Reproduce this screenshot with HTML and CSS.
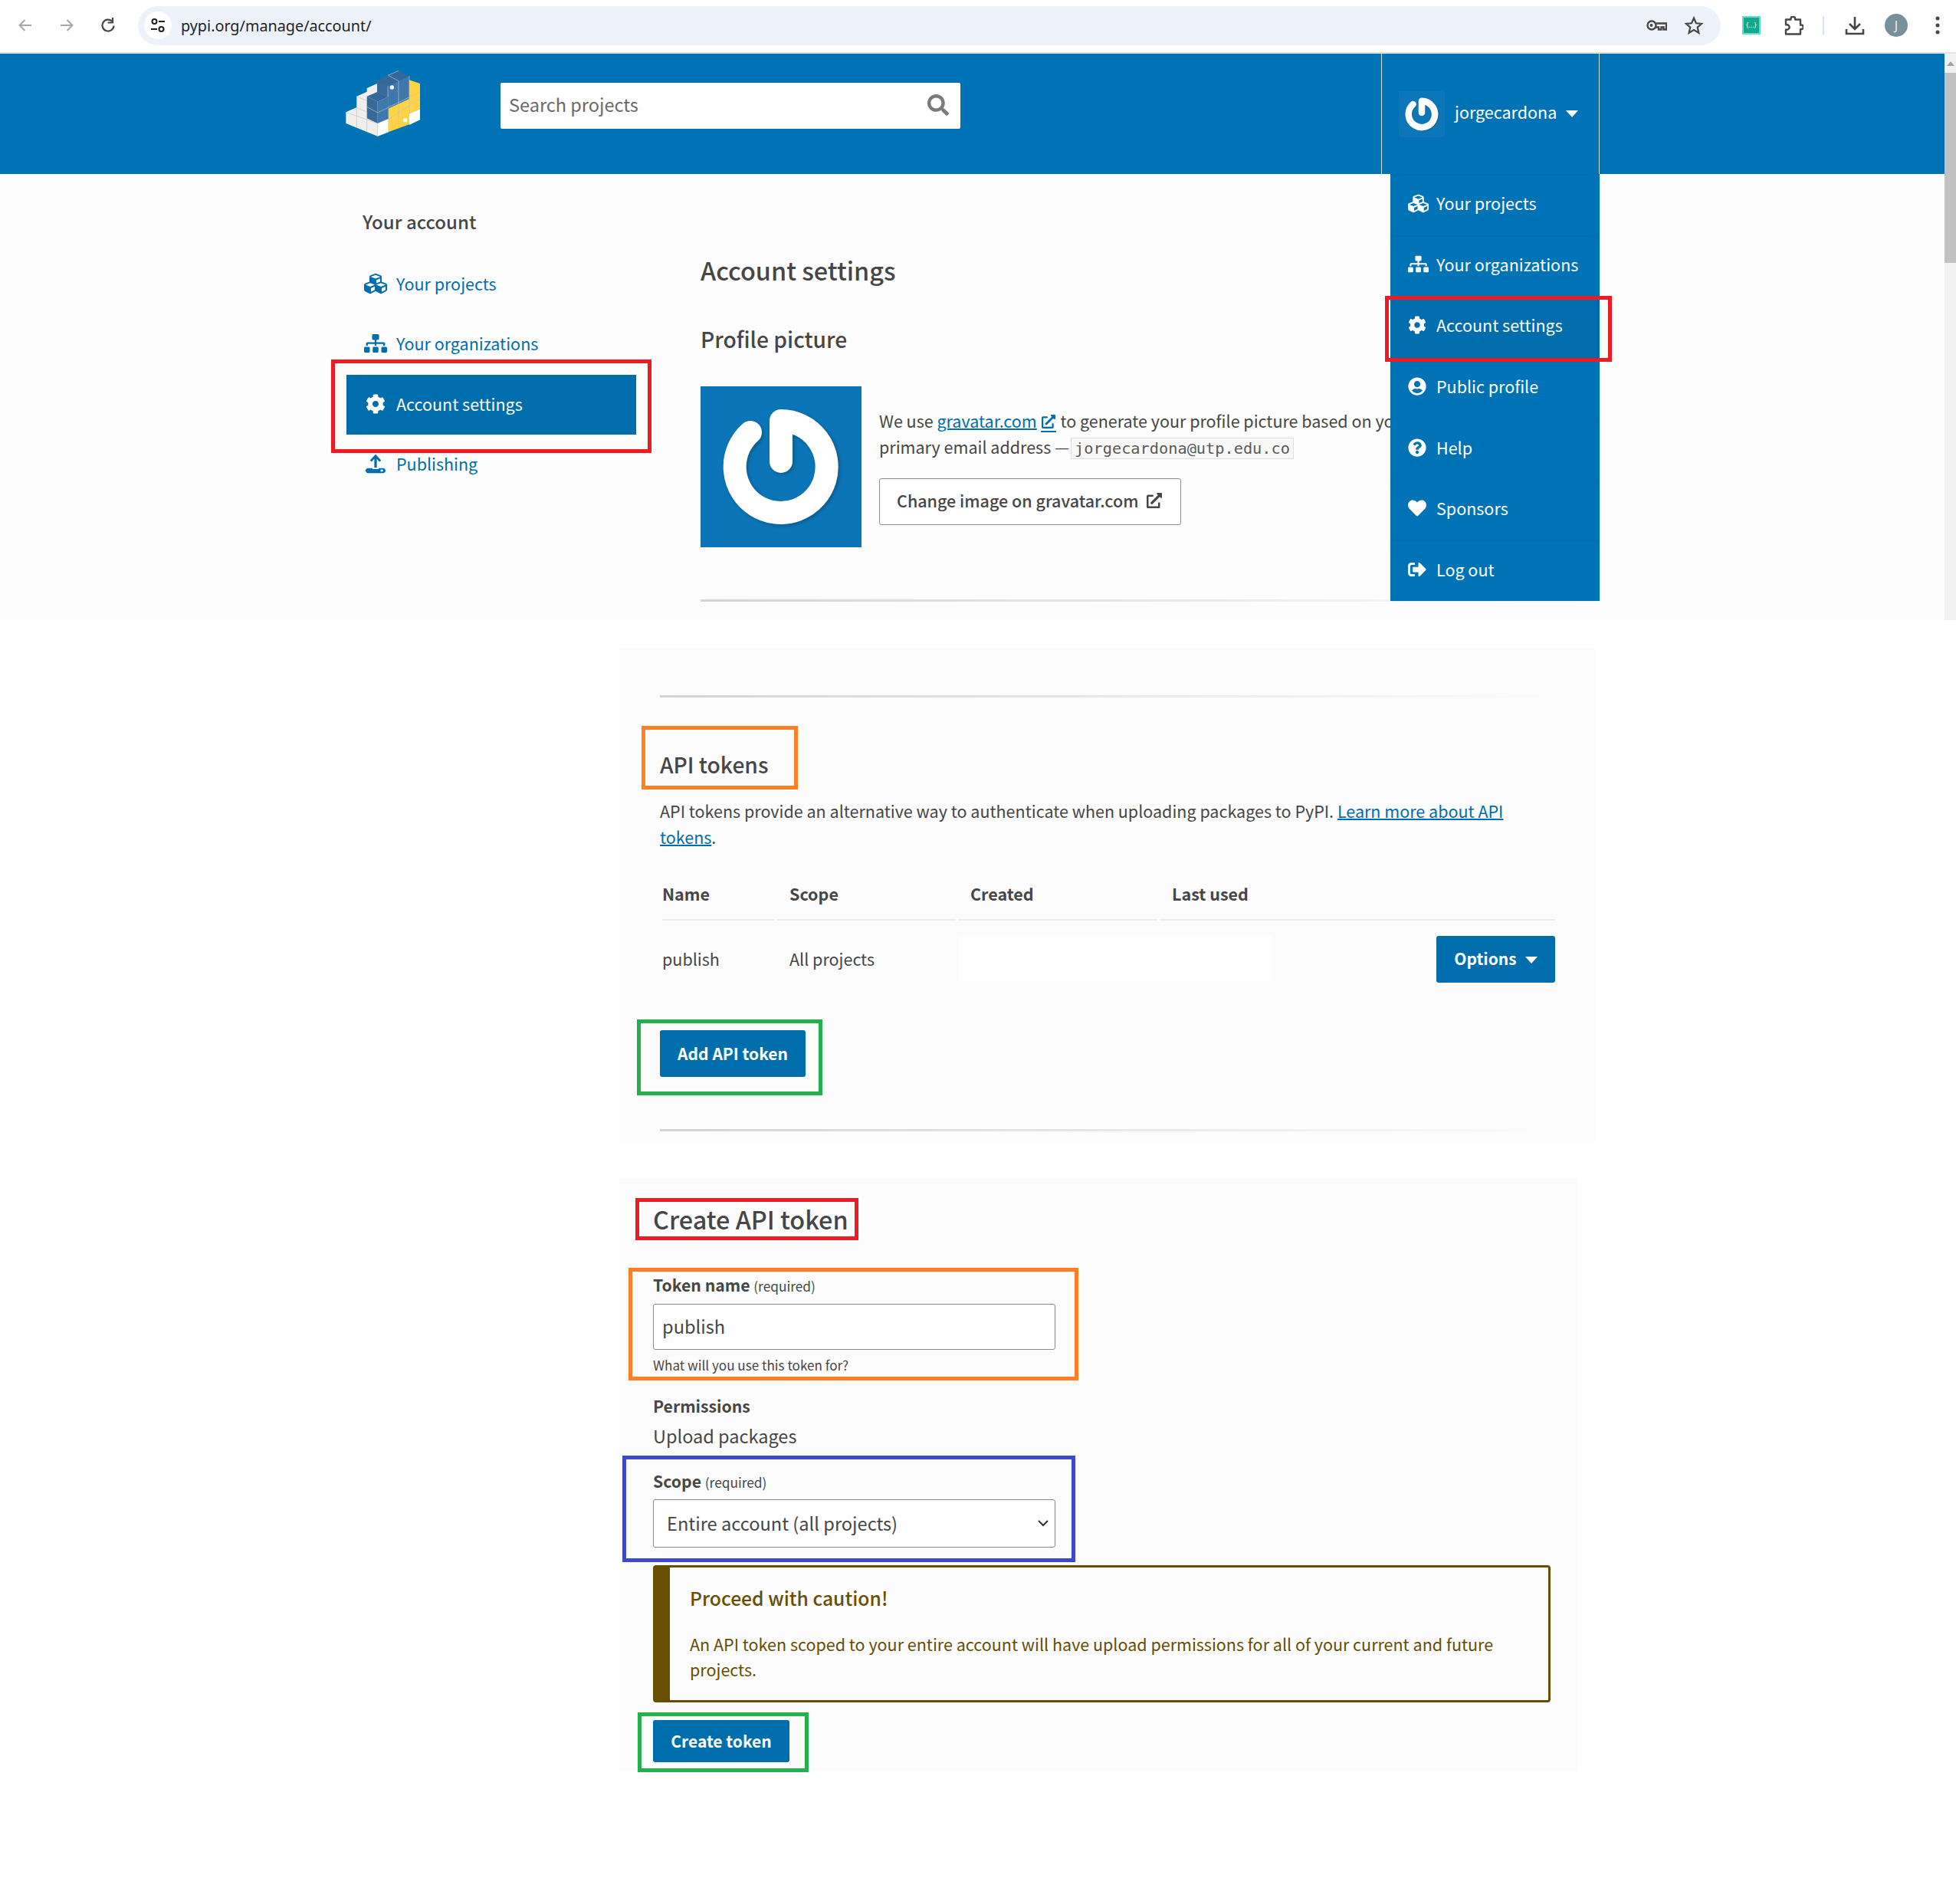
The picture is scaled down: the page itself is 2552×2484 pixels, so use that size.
FILE: index.html
```html
<!DOCTYPE html>
<html lang="en">
<head>
	<meta charset="UTF-8">
	<title>Account settings - PyPI</title>
	<link rel="stylesheet" href="styles.css">
</head>
<body>
<svg class="defs" width="0" height="0">
	<symbol id="i-cubes" viewBox="0 0 512 512"><path d="M488.6 250.2L392 214V105.5c0-15-9.3-28.4-23.4-33.7l-100-37.5c-8.1-3.1-17.1-3.1-25.3 0l-100 37.5c-14.1 5.3-23.4 18.7-23.4 33.7V214l-96.6 36.2C9.3 255.5 0 268.9 0 283.9V394c0 13.6 7.7 26.1 19.9 32.2l100 50c10.1 5.1 22.1 5.1 32.2 0l103.9-52 103.9 52c10.1 5.1 22.1 5.1 32.2 0l100-50c12.2-6.1 19.9-18.6 19.9-32.2V283.9c0-15-9.3-28.4-23.4-33.7zM358 214.8l-85 31.9v-68.2l85-37v73.3zM154 104.1l102-38.2 102 38.2v.6l-102 41.4-102-41.4v-.6zm84 291.1l-85 42.5v-79.1l85-38.8v75.4zm0-112l-102 41.4-102-41.4v-.6l102-38.2 102 38.2v.6zm240 112l-85 42.5v-79.1l85-38.8v75.4zm0-112l-102 41.4-102-41.4v-.6l102-38.2 102 38.2v.6z"/></symbol>
	<symbol id="i-sitemap" viewBox="0 0 640 512"><path d="M128 352H32c-17.67 0-32 14.33-32 32v96c0 17.67 14.33 32 32 32h96c17.67 0 32-14.33 32-32v-96c0-17.67-14.33-32-32-32zm-24-80h192v48h48v-48h192v48h48v-57.59c0-21.17-17.23-38.41-38.41-38.41H344v-64h40c17.67 0 32-14.33 32-32V32c0-17.67-14.33-32-32-32H256c-17.67 0-32 14.33-32 32v96c0 17.67 14.33 32 32 32h40v64H94.41C73.23 224 56 241.23 56 262.41V320h48v-48zm264 80h-96c-17.67 0-32 14.33-32 32v96c0 17.67 14.33 32 32 32h96c17.67 0 32-14.33 32-32v-96c0-17.67-14.33-32-32-32zm240 0h-96c-17.67 0-32 14.33-32 32v96c0 17.67 14.33 32 32 32h96c17.67 0 32-14.33 32-32v-96c0-17.67-14.33-32-32-32z"/></symbol>
	<symbol id="i-cog" viewBox="0 0 512 512"><path d="M487.4 315.7l-42.6-24.6c4.3-23.2 4.3-47 0-70.2l42.6-24.6c4.9-2.8 7.1-8.6 5.5-14-11.1-35.6-30-67.8-54.7-94.6-3.8-4.1-10-5.1-14.8-2.3L380.8 110c-17.9-15.4-38.5-27.3-60.8-35.1V25.8c0-5.6-3.9-10.5-9.4-11.7-36.7-8.2-74.3-7.8-109.2 0-5.5 1.2-9.4 6.1-9.4 11.7V75c-22.2 7.9-42.8 19.8-60.8 35.1L88.7 85.5c-4.9-2.8-11-1.9-14.8 2.3-24.7 26.7-43.6 58.9-54.7 94.6-1.7 5.4.6 11.2 5.5 14L67.3 221c-4.3 23.2-4.3 47 0 70.2l-42.6 24.6c-4.9 2.8-7.1 8.6-5.5 14 11.1 35.6 30 67.8 54.7 94.6 3.8 4.1 10 5.1 14.8 2.3l42.6-24.6c17.9 15.4 38.5 27.3 60.8 35.1v49.2c0 5.6 3.9 10.5 9.4 11.7 36.7 8.2 74.3 7.8 109.2 0 5.5-1.2 9.4-6.1 9.4-11.7v-49.2c22.2-7.9 42.8-19.8 60.8-35.1l42.6 24.6c4.9 2.8 11 1.9 14.8-2.3 24.7-26.7 43.6-58.9 54.7-94.6 1.5-5.5-.7-11.3-5.6-14.1zM256 336c-44.1 0-80-35.9-80-80s35.9-80 80-80 80 35.9 80 80-35.9 80-80 80z"/></symbol>
	<symbol id="i-upload" viewBox="0 0 32 32"><path d="M16 1l9 9.500-2.600 2.500-4.400-4.600V22h-4V7.900L9.600 13 7 10.500zM4 23h7v1.500h10V23h7c2.200 0 4 1.600 4 4s-1.800 4-4 4H4c-2.200 0-4-1.600-4-4s1.800-4 4-4zm22 2.500a1.600 1.600 0 1 0 0 3 1.600 1.600 0 1 0 0-3z" fill-rule="evenodd"/></symbol>
	<symbol id="i-user" viewBox="0 0 496 512"><path d="M248 8C111 8 0 119 0 256s111 248 248 248 248-111 248-248S385 8 248 8zm0 96c48.600 0 88 39.400 88 88s-39.400 88-88 88-88-39.400-88-88 39.400-88 88-88zm0 344c-58.700 0-111.300-26.600-146.500-68.200 18.800-35.400 55.600-59.800 98.500-59.800 2.400 0 4.800.4 7.100 1.100 13 4.200 26.600 6.900 40.900 6.900 14.300 0 28-2.700 40.900-6.900 2.300-.7 4.700-1.100 7.100-1.100 42.900 0 79.700 24.400 98.500 59.800C359.300 421.400 306.700 448 248 448z"/></symbol>
	<symbol id="i-help" viewBox="0 0 512 512"><path d="M504 256c0 136.997-111.043 248-248 248S8 392.997 8 256C8 119.083 119.043 8 256 8s248 111.083 248 248zM262.655 90c-54.497 0-89.255 22.957-116.549 63.758-3.536 5.286-2.353 12.415 2.715 16.258l34.699 26.310c5.205 3.947 12.621 3.008 16.665-2.122 17.864-22.658 30.113-35.797 57.303-35.797 20.429 0 45.698 13.148 45.698 32.958 0 14.976-12.363 22.667-32.534 33.976C247.128 238.528 216 254.941 216 296v4c0 6.627 5.373 12 12 12h56c6.627 0 12-5.373 12-12v-1.333c0-28.462 83.186-29.647 83.186-106.667 0-58.002-60.165-102-116.531-102zM256 338c-25.365 0-46 20.635-46 46 0 25.364 20.635 46 46 46s46-20.636 46-46c0-25.365-20.635-46-46-46z"/></symbol>
	<symbol id="i-heart" viewBox="0 0 512 512"><path d="M462.300 62.600C407.500 15.900 326 24.300 275.700 76.200L256 96.500l-19.700-20.300C186.100 24.300 104.500 15.900 49.700 62.600c-62.800 53.600-66.100 149.800-9.900 207.900l193.500 199.800c12.500 12.900 32.800 12.900 45.300 0l193.500-199.800c56.300-58.100 53-154.300-9.800-207.900z"/></symbol>
	<symbol id="i-logout" viewBox="0 0 512 512"><path d="M497 273L329 441c-15 15-41 4.500-41-17v-96H152c-13.300 0-24-10.700-24-24v-96c0-13.300 10.700-24 24-24h136V88c0-21.400 25.900-32 41-17l168 168c9.300 9.400 9.300 24.600 0 34zM192 436v-40c0-6.600-5.400-12-12-12H96c-17.700 0-32-14.300-32-32V160c0-17.700 14.300-32 32-32h84c6.600 0 12-5.400 12-12V76c0-6.600-5.400-12-12-12H96c-53 0-96 43-96 96v192c0 53 43 96 96 96h84c6.600 0 12-5.400 12-12z"/></symbol>
	<symbol id="i-search" viewBox="0 0 512 512"><path d="M505 442.700L405.300 343c-4.500-4.500-10.600-7-17-7H372c27.600-35.300 44-79.700 44-128C416 93.100 322.900 0 208 0S0 93.100 0 208s93.100 208 208 208c48.300 0 92.700-16.400 128-44v16.300c0 6.400 2.500 12.500 7 17l99.700 99.700c9.400 9.400 24.600 9.400 33.900 0l28.300-28.300c9.400-9.400 9.400-24.600.1-34zM208 336c-70.700 0-128-57.200-128-128 0-70.700 57.200-128 128-128 70.700 0 128 57.200 128 128 0 70.700-57.200 128-128 128z"/></symbol>
	<symbol id="i-ext" viewBox="0 0 512 512"><path d="M432 320h-32a16 16 0 0 0-16 16v112H64V128h144a16 16 0 0 0 16-16V80a16 16 0 0 0-16-16H48a48 48 0 0 0-48 48v352a48 48 0 0 0 48 48h352a48 48 0 0 0 48-48V336a16 16 0 0 0-16-16zM488 0H360c-21.370 0-32.050 25.910-17 41l35.730 35.730L135 320.370a24 24 0 0 0 0 34L157.670 377a24 24 0 0 0 34 0l243.610-243.680L471 169c15 15 41 4.500 41-17V24a24 24 0 0 0-24-24z"/></symbol>
	<symbol id="i-gravatar" viewBox="0 0 210 210"><path class="grav-ring" d="M65 60A60 60 0 1 0 105 45L105 98"/></symbol>
</svg>

<div class="shot">
	<!-- browser toolbar -->
	<div class="chrome">
		<svg class="nav-icon" viewBox="0 0 20 20"><path d="M18 10H3M9.500 3L2.500 10l7 7" fill="none" stroke="#a8a8a8" stroke-width="2"/></svg>
		<svg class="nav-icon nav-gap" viewBox="0 0 20 20"><path d="M2 10h15M10.500 3l7 7-7 7" fill="none" stroke="#a8a8a8" stroke-width="2"/></svg>
		<svg class="nav-icon nav-gap" viewBox="0 0 20 20"><path d="M17.500 10.500A7.500 7.500 0 1 1 15 4.500M16 0v6.500h-6.500" fill="none" stroke="#474747" stroke-width="2.200"/></svg>
		<div class="omnibox">
			<span class="site-info">
				<svg width="18" height="20" viewBox="0 0 18 20"><g fill="none" stroke="#1f1f1f" stroke-width="2"><circle cx="4.500" cy="5" r="3"/><circle cx="13.500" cy="15" r="3"/><path d="M10 5h8M0 15h8"/></g></svg>
			</span>
			<span class="url">pypi.org/manage/account/</span>
			<svg class="key-icon" width="27" height="16" viewBox="0 0 27 16"><g fill="none" stroke="#474747" stroke-width="2.400"><circle cx="7" cy="8" r="5.500"/><path d="M12.500 5.500H26v8h-3.500v-3h-3v3H16v-3h-3.500"/></g><circle cx="6.500" cy="8" r="2" fill="#474747"/></svg>
			<svg class="star-icon" width="24" height="24" viewBox="0 0 24 24"><path d="M12 2.500l2.900 6.800 7.300.6-5.500 4.800 1.700 7.200L12 18.100l-6.400 3.800 1.700-7.200L1.800 9.900l7.300-.6z" fill="none" stroke="#474747" stroke-width="2.200"/></svg>
		</div>
		<span class="ext-badge">{...}</span>
		<svg class="puzzle-icon" width="25" height="25" viewBox="0 0 25 25"><path d="M2 4.500h6.500V3.500a2.800 2.800 0 0 1 5.600 0v1h6.900v7h1a2.800 2.800 0 0 1 0 5.600h-1V23.500H2v-5.800h1.500a3.200 3.200 0 0 0 0-6.400H2z" fill="none" stroke="#474747" stroke-width="2.400" stroke-linejoin="round"/></svg>
		<span class="toolbar-sep"></span>
		<svg class="dl-icon" width="26" height="25" viewBox="0 0 26 25"><path d="M13 1v15M6 10l7 7 7-7M2 17v6h22v-6" fill="none" stroke="#474747" stroke-width="2.600"/></svg>
		<span class="profile-dot">J</span>
		<svg class="dots-icon" width="6" height="24" viewBox="0 0 6 24"><circle cx="3" cy="3" r="2.500" fill="#474747"/><circle cx="3" cy="12" r="2.500" fill="#474747"/><circle cx="3" cy="21" r="2.500" fill="#474747"/></svg>
	</div>

	<div class="viewport">
		<div class="site">
			<header class="site-head">
				<svg class="logo" width="120" height="100" viewBox="0 0 360 300">
					<path d="M34 184l42-19v-43l40-18V90l40-18 44 25v165l-42 16-124-50z" fill="#f0efec"/>
					<path d="M158 228l42-18v52l-42 16z" fill="#fff"/>
					<path d="M282 58l42 14v100l-42 18v42l-82 30v-96l82-38z" fill="#ffd343"/>
					<path d="M282 190l42-18v42l-42 20z" fill="#fff"/>
					<path d="M198 82l84-40v90l-82 38z" fill="#3f78ad"/>
					<path d="M156 60l42 22v42l-42-20z" fill="#366a9b"/>
					<path d="M156 60l42-20 42-18 42 20-84 40z" fill="#34689a"/>
					<path d="M116 122l42 21v85l-42-20z" fill="#366a9b"/>
					<path d="M158 143l42-19v86l-42 18z" fill="#3f78ad"/>
					<path d="M116 122l42-18 42 20-42 19z" fill="#34689a"/>
					<path d="M76 122l40 18M76 165l40 19M34 184l124 44M76 165v80M116 184v78M158 228v50M198 82v42M240 62v170M282 42v150M200 165l124-60M200 212l124-80M200 40l40 22M240 22l-42 18M158 186l42-20M116 163l42 23" fill="none" stroke="#bfc1c4" stroke-width="2"/>
					<circle cx="214" cy="87" r="8" fill="#fff"/>
					<circle cx="266" cy="215" r="8" fill="#fff"/>
				</svg>
				<div class="search">
					<span class="search-text">Search projects</span>
					<svg class="search-icon"><use href="#i-search"/></svg>
				</div>
				<div class="user">
					<span class="user-pic"><svg width="60" height="60"><use href="#i-gravatar"/></svg></span>
					<span class="user-name">jorgecardona</span>
					<span class="caret"></span>
					<nav class="user-menu">
						<a class="menu-item"><svg class="mi"><use href="#i-cubes"/></svg>Your projects</a>
						<a class="menu-item"><svg class="mi"><use href="#i-sitemap"/></svg>Your organizations</a>
						<a class="menu-item on"><svg class="mi mi-sm"><use href="#i-cog"/></svg>Account settings</a>
						<a class="menu-item"><svg class="mi mi-sm"><use href="#i-user"/></svg>Public profile</a>
						<a class="menu-item"><svg class="mi mi-sm"><use href="#i-help"/></svg>Help</a>
						<a class="menu-item"><svg class="mi mi-sm"><use href="#i-heart"/></svg>Sponsors</a>
						<a class="menu-item"><svg class="mi mi-sm"><use href="#i-logout"/></svg>Log out</a>
					</nav>
				</div>
			</header>

			<main class="site-main">
				<aside class="side">
					<h3 class="side-title">Your account</h3>
					<a class="side-item"><svg class="si"><use href="#i-cubes"/></svg>Your projects</a>
					<a class="side-item"><svg class="si"><use href="#i-sitemap"/></svg>Your organizations</a>
					<a class="side-item on"><svg class="si si-sm"><use href="#i-cog"/></svg>Account settings</a>
					<a class="side-item"><svg class="si si-sm"><use href="#i-upload"/></svg>Publishing</a>
				</aside>
				<section class="account">
					<h1 class="h-page">Account settings</h1>
					<h2 class="h-sub">Profile picture</h2>
					<div class="profile">
						<span class="big-pic"><svg width="210" height="210"><use href="#i-gravatar"/></svg></span>
						<div class="profile-text">
							<p class="copy">We use <a class="link">gravatar.com</a> <svg class="ext ext-link"><use href="#i-ext"/></svg> to generate your profile picture based on your<br>primary email address — <code class="mail">jorgecardona@utp.edu.co</code></p>
							<a class="btn-plain">Change image on gravatar.com <svg class="ext"><use href="#i-ext"/></svg></a>
						</div>
					</div>
					<div class="rule"></div>
				</section>
			</main>
		</div>
		<div class="scrollbar">
			<span class="scroll-up"></span>
			<span class="scroll-thumb"></span>
		</div>
	</div>
</div>

<section class="panel panel-tokens">
	<div class="rule"></div>
	<h2 class="h-sub h-tokens">API tokens</h2>
	<p class="copy tokens-copy">API tokens provide an alternative way to authenticate when uploading packages to PyPI. <a class="link">Learn more about API<br>tokens</a>.</p>
	<table class="tokens">
		<thead>
			<tr><th class="c-name">Name</th><th class="c-scope">Scope</th><th class="c-created">Created</th><th class="c-used">Last used</th></tr>
		</thead>
		<tbody>
			<tr>
				<td class="c-name">publish</td>
				<td class="c-scope">All projects</td>
				<td class="c-blank"><div class="blank-out"></div></td>
				<td class="c-actions"><a class="btn btn-options">Options<span class="caret caret-sm"></span></a></td>
			</tr>
		</tbody>
	</table>
	<a class="btn btn-add">Add API token</a>
	<div class="rule rule-end"></div>
</section>

<section class="panel panel-create">
	<h2 class="h-create">Create API token</h2>
	<label class="field-label label-first">Token name <small class="req">(required)</small></label>
	<input class="field" type="text" value="publish">
	<p class="help">What will you use this token for?</p>
	<div class="field-label label-perm">Permissions</div>
	<p class="perm-value">Upload packages</p>
	<label class="field-label label-scope">Scope <small class="req">(required)</small></label>
	<select class="field field-select"><option>Entire account (all projects)</option></select>
	<div class="caution">
		<h3 class="caution-title">Proceed with caution!</h3>
		<p class="caution-text">An API token scoped to your entire account will have upload permissions for all of your current and future<br>projects.</p>
	</div>
	<a class="btn btn-create">Create token</a>
</section>

<!-- marks drawn on top of the screenshot -->
<span class="mark mark-red m-side"></span>
<span class="mark mark-red m-menu"></span>
<span class="mark mark-orange m-tokens"></span>
<span class="mark mark-green m-add"></span>
<span class="mark mark-red m-create"></span>
<span class="mark mark-orange m-name"></span>
<span class="mark mark-blue m-scope"></span>
<span class="mark mark-green m-token-btn"></span>
</body>
</html>
```

FILE: styles.css
```css
* {
    margin: 0;
    padding: 0;
    box-sizing: border-box;
}

body {
    position: relative;
    width: 2552px;
    min-height: 2484px;
    background-color: #fff;
    font-family: "Noto Sans CJK JP", "Noto Sans", sans-serif;
    font-size: 21.500px;
    line-height: 34px;
    color: #464646;
    overflow-x: hidden;
}

.defs {
    position: absolute;
}

/* browser toolbar */
.chrome {
    display: flex;
    align-items: center;
    height: 70px;
    padding: 0 0 2px 23px;
    background-color: #fff;
    border-bottom: 2px solid #e2e2e2;
    font-family: "Noto Sans", sans-serif;
}

.nav-icon {
    width: 20px;
    height: 20px;
    flex: none;
}

.nav-gap {
    margin-left: 34px;
}

.omnibox {
    display: flex;
    align-items: center;
    width: 2065px;
    height: 51px;
    margin-left: 29px;
    padding: 0 23px 0 8px;
    background-color: #edf2fa;
    border-radius: 26px;
}

.site-info {
    display: flex;
    align-items: center;
    justify-content: center;
    width: 36px;
    height: 36px;
    background-color: #fff;
    border-radius: 50%;
}

.url {
    margin: 2px 0 0 12px;
    font-size: 19.800px;
    color: #1f1f1f;
}

.key-icon {
    margin-left: auto;
}

.star-icon {
    margin-left: 23px;
}

.ext-badge {
    width: 24px;
    height: 24px;
    margin-left: 28px;
    background-color: #13a88e;
    border: 2px solid #5fe0c8;
    font-size: 9px;
    line-height: 19px;
    text-align: center;
    color: #d9fff6;
}

.puzzle-icon {
    margin-left: 31px;
}

.toolbar-sep {
    width: 2px;
    height: 24px;
    margin-left: 25px;
    background-color: #d3e3fd;
}

.dl-icon {
    margin-left: 27px;
}

.profile-dot {
    width: 30px;
    height: 30px;
    margin-left: 26px;
    background-color: #78909c;
    border-radius: 50%;
    font-size: 16px;
    line-height: 30px;
    text-align: center;
    color: #e8eef0;
}

.dots-icon {
    margin-left: 36px;
}

/* first screenshot */
.viewport {
    display: flex;
    height: 739px;
}

.site {
    width: 2537px;
    background-color: #fdfdfd;
}

.scrollbar {
    position: relative;
    width: 15px;
    background-color: #f1f1f1;
}

.scroll-up {
    display: block;
    width: 0;
    margin: 10px auto 0;
    border: 5px solid transparent;
    border-top: 0;
    border-bottom: 6px solid #a3a3a3;
}

.scroll-thumb {
    display: block;
    height: 248px;
    margin-top: 9px;
    background-color: #c1c1c1;
}

.site-head {
    display: flex;
    height: 157px;
    padding: 0 450px 0 440px;
    background-color: #0073b7;
}

.logo {
    margin-top: 15px;
    flex: none;
}

.search {
    display: flex;
    align-items: center;
    justify-content: space-between;
    width: 600px;
    height: 60px;
    margin: 38px 0 0 93px;
    padding: 0 15px 0 11px;
    background-color: #fff;
    border-radius: 2px;
    font-size: 23.500px;
    color: #6a6a6a;
}

.search-text {
    margin-bottom: 4px;
}

.search-icon {
    width: 28px;
    height: 28px;
    margin-bottom: 2px;
    fill: #7a7a7a;
}

.user {
    position: relative;
    display: flex;
    align-items: center;
    width: 285px;
    margin-left: auto;
    padding-left: 22px;
    border-left: 1px solid #d5e6f2;
    border-right: 1px solid #d5e6f2;
    color: #fff;
}

.user-pic {
    width: 60px;
    height: 60px;
    background-color: #0c76b8;
    border-radius: 3px;
}

.grav-ring {
    fill: none;
    stroke: #fff;
    stroke-width: 30;
    stroke-linecap: round;
    stroke-linejoin: round;
    filter: drop-shadow(2px 2px 2px rgba(0, 0, 0, .22));
}

.user-name {
    margin: 0 0 6px 13px;
}

.caret {
    width: 0;
    margin-left: 12px;
    border-left: 8px solid transparent;
    border-right: 8px solid transparent;
    border-top: 9px solid #fff;
}

.user-menu {
    position: absolute;
    top: 100%;
    right: -1px;
    z-index: 2;
    display: flex;
    flex-direction: column;
    width: 273px;
    height: 557px;
    background-color: #0073b7;
    box-shadow: 1px 1px 2px rgba(0, 0, 0, .06);
}

.menu-item {
    display: flex;
    flex: 1;
    align-items: center;
    padding: 0 0 4px 23px;
    border-top: 1px solid #006aa8;
    color: #fff;
}

.menu-item.on {
    background-color: #006dad;
}

.mi {
    width: 27px;
    height: 27px;
    margin-right: 10px;
    fill: #fff;
    flex: none;
}

.mi-sm {
    width: 24px;
    height: 24px;
    margin-right: 13px;
}

.site-main {
    display: flex;
    height: 582px;
    padding-left: 452px;
}

.side {
    width: 378px;
    flex: none;
    padding-top: 45px;
}

.side-title {
    margin: 0 0 26px 21px;
    font-size: 24px;
    font-weight: 500;
}

.side-item {
    display: flex;
    align-items: center;
    height: 78.300px;
    padding: 0 0 2px 23px;
    color: #006dad;
}

.side-item.on {
    background-color: #006dad;
    color: #fff;
}

.si {
    width: 30px;
    height: 30px;
    margin-right: 12px;
    fill: #006dad;
    flex: none;
}

.si-sm {
    width: 26px;
    height: 26px;
    margin: 0 14px 0 2px;
}

.side-item.on .si {
    fill: #fff;
}

.account {
    width: 1173px;
    margin-left: 84px;
    padding-top: 103px;
}

.h-page {
    font-size: 32.400px;
    line-height: 44px;
    font-weight: 500;
}

.h-sub {
    margin-top: 46px;
    font-size: 28.200px;
    line-height: 44px;
    font-weight: 500;
}

.profile {
    display: flex;
    margin-top: 40px;
}

.big-pic {
    width: 210px;
    height: 210px;
    flex: none;
    background-color: #0c75b7;
}

.profile-text {
    margin-left: 23px;
    padding-top: 28px;
    white-space: nowrap;
}

.link {
    color: #006dad;
    text-decoration: underline;
    text-decoration-thickness: 2px;
}

.ext {
    display: inline-block;
    width: 20px;
    height: 20px;
    margin: 0 2px;
    vertical-align: -3px;
    fill: #464646;
}

.ext-link {
    height: 23px;
    margin: 0 1px 0 0;
    padding-bottom: 3px;
    border-bottom: 2px solid #006dad;
    vertical-align: -6px;
    fill: #006dad;
}

.mail {
    display: inline-block;
    margin-left: -3px;
    padding: 0 4px;
    background-color: #f8f8f8;
    border: 1px solid #e0e0e0;
    font-family: "DejaVu Sans Mono", monospace;
    font-size: 20.300px;
    line-height: 26px;
    color: #5a5a5a;
}

.btn-plain {
    display: inline-flex;
    align-items: center;
    gap: 9px;
    height: 61px;
    margin-top: 24px;
    padding: 0 22px 3px;
    background-color: #fff;
    border: 1px solid #8a8a8a;
    border-radius: 3px;
    font-weight: 500;
}

.rule {
    height: 3px;
    margin-top: 68px;
    background-image: linear-gradient(90deg, #d3d3d3, rgba(211, 211, 211, 0));
}

/* second screenshot */
.panel {
    background-color: #fcfcfc;
    margin-left: 808px;
}

.panel-tokens {
    width: 1273px;
    margin-top: 36px;
    padding: 62px 50px 13px 53px;
}

.panel-tokens .rule {
    margin-top: 0;
}

.panel-tokens .rule-end {
    margin-top: 68px;
}

.h-tokens {
    margin-top: 65px;
}

.tokens-copy {
    margin-top: 22px;
    white-space: nowrap;
}

.tokens {
    width: 1171px;
    margin-top: 21px;
    border-collapse: separate;
    border-spacing: 3px;
    table-layout: fixed;
}

.tokens th {
    height: 68px;
    border-bottom: 2px solid #eee;
    font-weight: 700;
    text-align: left;
}

.tokens td {
    height: 94px;
}

.c-name {
    width: 147px;
}

.c-scope {
    width: 233px;
    padding-left: 16px;
}

.c-created {
    width: 260px;
    padding-left: 16px;
}

.c-used {
    padding-left: 16px;
}

.blank-out {
    width: 410px;
    height: 60px;
    background-color: #fefefe;
}

.c-actions {
    text-align: right;
}

.btn {
    display: inline-flex;
    align-items: center;
    justify-content: center;
    padding-bottom: 2px;
    background-color: #006dad;
    border-radius: 3px;
    font-size: 21px;
    font-weight: 600;
    color: #fff;
}

.btn-options {
    width: 155px;
    height: 61px;
}

.caret-sm {
    margin: 5px 0 0 11px;
    border-left-width: 8px;
    border-right-width: 8px;
    border-top-width: 9px;
}

.btn-add {
    width: 190px;
    height: 61px;
    margin-top: 43px;
}

/* third screenshot */
.panel-create {
    width: 1250px;
    margin-top: 48px;
    padding: 28px 0 11px 44px;
}

.h-create {
    font-size: 32.400px;
    line-height: 50px;
    font-weight: 500;
}

.field-label {
    display: block;
    font-size: 21.200px;
    font-weight: 700;
}

.req {
    font-size: 17.300px;
    font-weight: 400;
}

.label-first {
    margin-top: 44px;
}

.field {
    display: block;
    width: 525px;
    height: 60px;
    margin-top: 6px;
    padding: 0 11px 2px;
    background-color: #fff;
    border: 1px solid #8a8a8a;
    border-radius: 3px;
    font-family: inherit;
    font-size: 23.600px;
    color: #464646;
}

.help {
    margin-top: 6px;
    font-size: 17.100px;
    line-height: 28px;
}

.label-perm {
    margin-top: 22px;
}

.perm-value {
    margin-top: 5px;
    font-size: 23.500px;
}

.label-scope {
    margin-top: 25px;
}

.field-select {
    height: 63px;
    margin-top: 5px;
    padding: 0 10px 2px 17px;
    appearance: none;
    background-image: url("data:image/svg+xml,%3Csvg xmlns='http://www.w3.org/2000/svg' width='14' height='9' viewBox='0 0 14 9'%3E%3Cpath d='M1 1l6 6 6-6' fill='none' stroke='%23333' stroke-width='2'/%3E%3C/svg%3E");
    background-repeat: no-repeat;
    background-position: right 8px center;
}

.caution {
    width: 1171px;
    margin-top: 23px;
    padding: 22px 0 24px 26px;
    border: 3px solid #664e04;
    border-left-width: 22px;
    border-radius: 4px;
    color: #664e04;
}

.caution-title {
    font-size: 24.700px;
    font-weight: 500;
}

.caution-text {
    margin-top: 27px;
    line-height: 33px;
}

.btn-create {
    width: 178px;
    height: 55px;
    margin-top: 23px;
}

/* paint marks */
.mark {
    position: absolute;
    z-index: 5;
    border-width: 5px;
    border-style: solid;
}

.mark-red {
    border-color: #ed1c24;
}

.mark-orange {
    border-color: #ff7f27;
}

.mark-green {
    border-color: #22b14c;
}

.mark-blue {
    border-color: #3f48cc;
}

.m-side {
    left: 432px;
    top: 469px;
    width: 418px;
    height: 122px;
}

.m-menu {
    left: 1807px;
    top: 386px;
    width: 296px;
    height: 86px;
}

.m-tokens {
    left: 837px;
    top: 947px;
    width: 204px;
    height: 83px;
}

.m-add {
    left: 831px;
    top: 1330px;
    width: 242px;
    height: 99px;
}

.m-create {
    left: 829px;
    top: 1563px;
    width: 291px;
    height: 55px;
}

.m-name {
    left: 820px;
    top: 1654px;
    width: 587px;
    height: 147px;
}

.m-scope {
    left: 812px;
    top: 1899px;
    width: 591px;
    height: 139px;
}

.m-token-btn {
    left: 832px;
    top: 2234px;
    width: 223px;
    height: 78px;
}
```
